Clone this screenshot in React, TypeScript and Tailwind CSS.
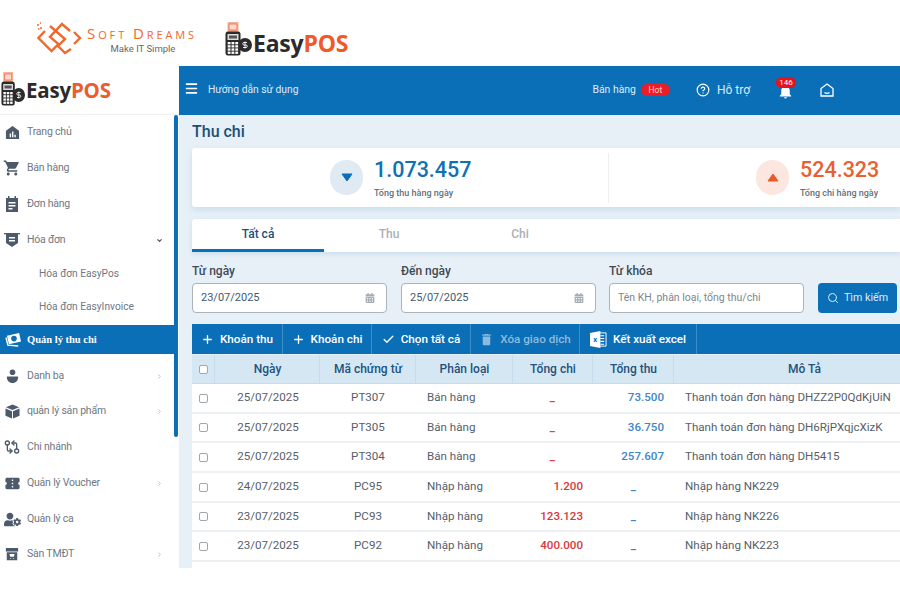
import React from "react";
import { Menu, CircleHelp, Plus, Check, Search, ChevronRight, ChevronDown, GitCompareArrows } from "lucide-react";
import { MdShoppingCart, MdNotifications, MdDelete, MdConfirmationNumber } from "react-icons/md";
import { FaCalendarAlt, FaUserCog } from "react-icons/fa";

const Pos = ({ className }: { className: string }) => (
  <svg viewBox="0 0 27 34" preserveAspectRatio="none" className={className}>
    <path d="M2.500 0h11v11h-11z" fill="#f6b39a" />
    <path d="M4 2h8v6H4z" fill="#fbd9cb" stroke="#e8603a" strokeWidth="0.700" />
    <circle cx="20" cy="23" r="7" fill="#2b2b2b" />
    <path d="M22 20.500h-3a1.200 1.200 0 0 0 0 2.500h2a1.200 1.200 0 0 1 0 2.500h-3M20 19.500v7" stroke="#fff" strokeWidth="0.900" fill="none" />
    <rect x="0.500" y="9.500" width="15" height="24" rx="2.500" fill="#2b2b2b" />
    <rect x="2.500" y="12" width="11" height="6" fill="#dcdcdc" />
    <rect x="4" y="13.500" width="8" height="3" fill="#555" />
    {[0, 1, 2, 3].map((r) => [0, 1, 2].map((c) => <rect key={`${r}${c}`} x={2.700 + c * 3.800} y={20 + r * 3.200} width="2.800" height="2.300" fill="#fff" />))}
  </svg>
);

const Home = () => (
  <svg viewBox="0 0 16 16" className="w-[15px] h-[15px]" fill="#4d5a6b">
    <path d="M8 1 15 6v9H1V6z" />
    <path d="M5 9h1.500v4H5zM7.500 7H9v6H7.500zM10 10.500h1.500V13H10z" fill="#fff" />
  </svg>
);
const Clip = () => (
  <svg viewBox="0 0 16 16" className="w-[16px] h-[16px]" fill="#4d5a6b">
    <path d="M4 0h1.500v2h5V0H12v2h2v14H2V2h2z" />
    <path d="M4.500 6h7v1.500h-7zM4.500 9h7v1.500h-7zM4.500 12h4v1.500h-4z" fill="#fff" />
  </svg>
);
const Shield = () => (
  <svg viewBox="0 0 16 16" className="w-[16px] h-[16px]" fill="#4d5a6b">
    <path d="M0 1h16v1.200H14V11l-6 4-6-4V2.200H0z" />
    <path d="M5 5h6v1.500H5zM5 8h6v1.500H5z" fill="#fff" />
  </svg>
);
const Money = () => (
  <svg viewBox="0 0 18 16" className="w-[17px] h-[15px]">
    <path d="M2 4 15 1l2 9-13 3z" fill="#fff" />
    <circle cx="9.500" cy="7" r="3" fill="#0b6fb8" />
    <path d="M1 6l2 8 11 1" stroke="#fff" strokeWidth="1.500" fill="none" />
  </svg>
);
const Store = () => (
  <svg viewBox="0 0 16 16" className="w-[14px] h-[14px]" fill="#4d5a6b">
    <path d="M1 1h14v4H1zM2 6h12v9H2z" />
    <path d="M5 8h6l-.8 3H6zM6 12.500h1v1H6zM9.200 12.500h1v1h-1z" fill="#fff" />
  </svg>
);
const Person = () => (
  <svg viewBox="0 0 16 16" className="w-[15px] h-[15px]" fill="#4d5a6b">
    <circle cx="8" cy="3.500" r="3" />
    <path d="M2 8h12c.5 4-2.500 7-6 7s-6.500-3-6-7z" />
  </svg>
);
const Cube = () => (
  <svg viewBox="0 0 16 16" className="w-[15px] h-[15px]" fill="#4d5a6b">
    <path d="M8 .500 15 3.500 8 6.500 1 3.500z" />
    <path d="M.500 4.800 7.500 7.700V15.500L.500 12.500zM15.500 4.800 8.500 7.700V15.500L15.500 12.500z" />
  </svg>
);

type Item = { label: string; icon: React.ReactNode; arrow?: boolean; down?: boolean; h: string };
const top: Item[] = [
  { label: "Trang chủ", icon: <Home />, h: "h-[36px]" },
  { label: "Bán hàng", icon: <MdShoppingCart size={18} color="#4d5a6b" />, h: "h-[36px]" },
  { label: "Đơn hàng", icon: <Clip />, h: "h-[36px]" },
  { label: "Hóa đơn", icon: <Shield />, down: true, h: "h-[36px]" },
];
const rest: Item[] = [
  { label: "Danh bạ", icon: <Person />, arrow: true, h: "h-[36px]" },
  { label: "quản lý sản phẩm", icon: <Cube />, arrow: true, h: "h-[34px]" },
  { label: "Chi nhánh", icon: <GitCompareArrows size={16} color="#4d5a6b" />, h: "h-[37px]" },
  { label: "Quản lý Voucher", icon: <MdConfirmationNumber size={17} color="#4d5a6b" />, arrow: true, h: "h-[36px]" },
  { label: "Quản lý ca", icon: <FaUserCog size={17} color="#4d5a6b" />, h: "h-[36px]" },
  { label: "Sàn TMĐT", icon: <Store />, arrow: true, h: "h-[34px]" },
];

const NavRow = ({ it }: { it: Item }) => (
  <div className={`${it.h} flex items-center text-[10.500px] tracking-[-0.2px] text-[#6f7782] shrink-0`}>
    <span className="w-[27px] pl-[2px] shrink-0 flex justify-center pr-[5px]">{it.icon}</span>
    <span className="flex-1">{it.label}</span>
    {it.arrow && <ChevronRight size={7} strokeWidth={3} className="mr-[11px] text-[#b5bac0]" />}
    {it.down && <ChevronDown size={7} strokeWidth={4} className="mr-[11px] text-[#555]" />}
  </div>
);

const rows = [
  ["25/07/2025", "PT307", "Bán hàng", "_", "73.500", "Thanh toán đơn hàng DHZZ2P0QdKjUiN", "h-[30px]"],
  ["25/07/2025", "PT305", "Bán hàng", "_", "36.750", "Thanh toán đơn hàng DH6RjPXqjcXizK", "h-[29px]"],
  ["25/07/2025", "PT304", "Bán hàng", "_", "257.607", "Thanh toán đơn hàng DH5415", "h-[30px]"],
  ["24/07/2025", "PC95", "Nhập hàng", "1.200", "_", "Nhập hàng NK229", "h-[30px]"],
  ["23/07/2025", "PC93", "Nhập hàng", "123.123", "_", "Nhập hàng NK226", "h-[29px]"],
  ["23/07/2025", "PC92", "Nhập hàng", "400.000", "_", "Nhập hàng NK223", "h-[30px]"],
];

const Box = () => <span className="block w-[9px] h-[9px] rounded-[2px] border border-[#a0a6ac] bg-white" />;
const TH = ({ children }: { children?: React.ReactNode }) => (
  <div className="flex items-center justify-center pl-px border-r border-[#c5dcec] last:border-r-0 font-medium text-[12px] text-[#23527c]">{children}</div>
);
const Tool = ({ icon, label, className, dim }: { icon: React.ReactNode; label: string; className: string; dim?: boolean }) => (
  <div className={`${className} h-full pt-px flex items-center justify-center gap-[6px] border-r border-[#3d8dc8] font-medium text-[11.700px] ${dim ? "text-[#8dbbdd]" : "text-white"}`}>
    {icon}
    {label}
  </div>
);
const Field = ({ label, value, width, placeholder }: { label: string; value?: string; width: string; placeholder?: string }) => (
  <div className={`${width} shrink-0`}>
    <div className="h-[24px] text-[12px] font-medium text-[#3f4a55] flex items-center">{label}</div>
    <div className="h-[30px] rounded-[4px] border border-[#aab4bc] bg-white flex items-center px-[8px] text-[11px]">
      {value ? <span className="flex-1 text-[#3e5a70]">{value}</span> : <span className="flex-1 text-[#7d8790] text-[10.500px]">{placeholder}</span>}
      {value && <FaCalendarAlt size={10} color="#a3adb5" className="mr-[3px]" />}
    </div>
  </div>
);

export default function App() {
  return (
    <div className="w-[900px] h-[600px] bg-white overflow-hidden font-['Roboto',sans-serif] flex flex-col">
      <div className="h-[66px] shrink-0 flex items-start pt-[23px]">
        <svg viewBox="0 0 46 34" className="w-[46px] h-[34px] ml-[37px] -mt-[1px]" fill="none" stroke="#f0692a" strokeWidth="2.400">
          <path d="M8 9 1.500 16l13 13 7-7L13 15 25 2l8 7M13 4l15 13-7 7 7 7 6-4M37 10l6 6-6 6" />
          <path d="M0 3h2M3 6h2M1 7h1.500M3 1h1" strokeWidth="1.500" />
        </svg>
        <div className="ml-[4px] w-[112px] pt-[3px]">
          <div className="text-[11px] leading-[14px] tracking-[2.900px] text-[#f0692a] font-['Open_Sans',sans-serif] whitespace-nowrap">
            <span className="text-[15px]">S</span>OFT <span className="text-[15px]">D</span>REAMS
          </div>
          <div className="text-[9.500px] leading-[12px] mt-[1px] text-[#666] text-center">Make IT Simple</div>
        </div>
        <Pos className="w-[27px] h-[34px] ml-[26px] -mt-px" />
        <div className="text-[23px] leading-[28px] mt-[6px] font-bold font-['Open_Sans',sans-serif] tracking-[-0.200px] text-[#2b2b2b] ml-[1px]">
          Easy<span className="text-[#f0592a]">POS</span>
        </div>
      </div>

      <div className="h-[502px] flex shrink-0">
        <div className="w-[179px] shrink-0 flex flex-col">
          <div className="h-[49px] shrink-0 flex items-center border-b border-[#eef0f2]">
            <Pos className="w-[24px] h-[34px] ml-px -mt-[2px]" />
            <div className="text-[20.500px] font-bold font-['Open_Sans',sans-serif] tracking-[-0.200px] text-[#2b2b2b] ml-px">
              Easy<span className="text-[#ea5d2c]">POS</span>
            </div>
          </div>
          <div className="flex-1 flex min-h-0">
            <div className="flex-1 flex flex-col min-w-0 -mt-px">
              {top.map((it) => <NavRow key={it.label} it={it} />)}
              <div className="h-[33px] pl-[39px] flex items-center text-[10.200px] text-[#6f7782] shrink-0 -mt-px">Hóa đơn EasyPos</div>
              <div className="h-[33px] pl-[39px] flex items-center text-[10.200px] text-[#6f7782] shrink-0">Hóa đơn EasyInvoice</div>
              <div className="h-[29px] shrink-0 mt-[2px] bg-[#0b6fb8] flex items-center text-white font-['Liberation_Serif',serif] font-bold text-[10.500px]">
                <span className="w-[27px] pl-[2px] flex justify-center pr-[3px]"><Money /></span>
                Quản lý thu chi
              </div>
              <div className="h-[4px] shrink-0" />
              {rest.map((it) => <NavRow key={it.label} it={it} />)}
            </div>
            <div className="w-[4px] shrink-0 mr-px">
              <div className="h-[322px] bg-[#0b6fb8] rounded-[2px]" />
            </div>
          </div>
        </div>

        <div className="flex-1 min-w-0 flex flex-col bg-[#e7f0f7]">
          <div className="h-[49px] shrink-0 bg-[#0b6fb8] flex items-center pb-px text-white">
            <Menu size={15} strokeWidth={2.500} className="ml-[5px] -mt-[3px]" />
            <span className="ml-[9px] text-[10.300px] text-[#dcecf7]">Hướng dẫn sử dụng</span>
            <span className="ml-auto text-[10.400px] text-[#dcecf7]">Bán hàng</span>
            <span className="ml-[5px] w-[29px] h-[12px] rounded-full bg-[#ee1c25] text-[8.500px] leading-[12px] text-center text-[#ffd5d5]">Hot</span>
            <CircleHelp size={14} className="ml-[26px]" />
            <span className="ml-[7px] text-[12px] text-[#dcecf7]">Hỗ trợ</span>
            <div className="relative ml-[27px] mt-[2px]">
              <MdNotifications size={17} />
              <span className="absolute -top-[6px] left-[-1px] w-[20px] h-[11px] rounded-full bg-[#e2141d] text-[8px] leading-[11px] text-center">146</span>
            </div>
            <svg viewBox="0 0 14 14" className="w-[14px] h-[14px] ml-[26px] mr-[66px]" fill="none" stroke="#fff" strokeWidth="1.300">
              <path d="M7 1 13 5.500V13H1V5.500zM4.500 9.500c1.500 1 3.500 1 5 0" />
            </svg>
          </div>

          <div className="flex-1 min-h-0 pl-[13px] flex flex-col">
            <div className="h-[33px] shrink-0 flex items-center text-[16px] font-medium text-[#1d4f76]">Thu chi</div>
            <div className="h-[59px] shrink-0 bg-white rounded-l-[3px] shadow-[0_3px_6px_rgba(120,170,210,0.25)] flex items-center">
              <div className="w-[417px] h-[50px] border-r border-[#edf0f2] flex items-center shrink-0 pl-[138px]">
                <div className="w-[33px] h-[35px] rounded-full bg-[#dfeaf3] flex items-center justify-center">
                  <svg viewBox="0 0 12 9" className="w-[12px] h-[9px]"><path d="M1 1h10L6 8z" fill="#0b6fb8" stroke="#0b6fb8" strokeLinejoin="round" /></svg>
                </div>
                <div className="ml-[11px]">
                  <div className="text-[21.500px] leading-[26px] mt-[1px] font-medium text-[#0f71b5]">1.073.457</div>
                  <div className="text-[9px] leading-[11px] mt-[5px] font-medium text-[#666f7b]">Tổng thu hàng ngày</div>
                </div>
              </div>
              <div className="ml-[147px] w-[33px] h-[35px] rounded-full bg-[#fbe7df] flex items-center justify-center shrink-0">
                <svg viewBox="0 0 12 9" className="w-[12px] h-[9px]"><path d="M1 8h10L6 1z" fill="#ea5a28" stroke="#ea5a28" strokeLinejoin="round" /></svg>
              </div>
              <div className="ml-[11px]">
                <div className="text-[21.500px] leading-[26px] mt-[1px] font-medium text-[#e8602f]">524.323</div>
                <div className="text-[9px] leading-[11px] mt-[5px] font-medium text-[#666f7b] whitespace-nowrap">Tổng chi hàng ngày</div>
              </div>
            </div>

            <div className="h-[33px] shrink-0 mt-[12px] bg-white rounded-tl-[3px] flex shadow-[0_2px_5px_rgba(120,170,210,0.25)]">
              <div className="w-[132px] border-b-[3px] border-[#0b6fb8] flex items-center justify-center font-medium text-[12px] text-[#1d4f76]">Tất cả</div>
              <div className="w-[130px] border-b-[3px] border-transparent flex items-center justify-center text-[12px] font-medium text-[#a9b0b6]">Thu</div>
              <div className="w-[132px] border-b-[3px] border-transparent flex items-center justify-center text-[12px] font-medium text-[#a9b0b6]">Chi</div>
            </div>

            <div className="mt-[7px] h-[54px] shrink-0 flex items-end">
              <Field label="Từ ngày" value="23/07/2025" width="w-[195px]" />
              <Field label="Đến ngày" value="25/07/2025" width="w-[195px] ml-[14px]" />
              <Field label="Từ khóa" placeholder="Tên KH, phân loại, tổng thu/chi" width="w-[195px] ml-[13px]" />
              <div className="ml-[14px] w-[79px] h-[30px] rounded-[4px] bg-[#0b6fb8] text-[#dcecf7] text-[10.700px] flex items-center justify-center gap-[5px] shrink-0">
                <Search size={12} />Tìm kiếm
              </div>
            </div>

            <div className="mt-[11px] h-[30px] shrink-0 bg-[#0b6fb8] flex items-center">
              <Tool className="w-[91px]" icon={<Plus size={13} strokeWidth={2.500} />} label="Khoản thu" />
              <Tool className="w-[89px]" icon={<Plus size={13} strokeWidth={2.500} />} label="Khoản chi" />
              <Tool className="w-[99px]" icon={<Check size={13} strokeWidth={2.500} />} label="Chọn tất cả" />
              <Tool className="w-[109px]" dim icon={<MdDelete size={15} />} label="Xóa giao dịch" />
              <Tool
                className="w-[117px]"
                icon={
                  <svg viewBox="0 0 18 18" className="w-[17px] h-[17px]">
                    <path d="M9 2h8v14H9z" fill="none" stroke="#fff" strokeWidth="1" />
                    <path d="M11 5h4M11 8h4M11 11h4M11 14h4" stroke="#fff" strokeWidth="1.200" />
                    <path d="M0 2 11 0v18L0 16z" fill="#fff" />
                    <text x="5.500" y="12" fontSize="8" fontWeight="700" textAnchor="middle" fill="#0b6fb8" fontFamily="Roboto">x</text>
                  </svg>
                }
                label="Kết xuất excel"
              />
            </div>

            <div className="mt-px h-[29px] shrink-0 bg-[#d6e7f4] grid grid-cols-[23px_105px_96px_97px_80px_81px_1fr] border-b border-[#c5dcec]">
              <TH><Box /></TH>
              <TH>Ngày</TH>
              <TH>Mã chứng từ</TH>
              <TH>Phân loại</TH>
              <TH>Tổng chi</TH>
              <TH>Tổng thu</TH>
              <TH><span className="pl-[34px]">Mô Tả</span></TH>
            </div>
            <div className="flex-1 bg-white min-h-0 overflow-hidden">
              {rows.map((r) => (
                <div key={r[1]} className={`${r[6]} grid grid-cols-[23px_105px_96px_97px_80px_81px_1fr] items-center border-b-2 border-[#eef1f3] text-[11.600px] text-[#57606a]`}>
                  <div className="flex justify-center"><Box /></div>
                  <div className="text-center pl-px">{r[0]}</div>
                  <div className="text-center">{r[1]}</div>
                  <div className="pl-[11px]">{r[2]}</div>
                  <div className={`text-right ${r[3] === "_" ? "pr-[38px] font-bold text-[#e0413c]" : "pr-[10px] font-medium text-[#d9373a]"}`}>{r[3]}</div>
                  <div className={`text-right ${r[4] === "_" ? "pr-[38px] font-bold text-[#3f86c8]" : "pr-[10px] font-medium text-[#3f86c8]"}`}>{r[4]}</div>
                  <div className="pl-[11px] whitespace-nowrap">{r[5]}</div>
                </div>
              ))}
            </div>
          </div>
        </div>
      </div>
    </div>
  );
}
